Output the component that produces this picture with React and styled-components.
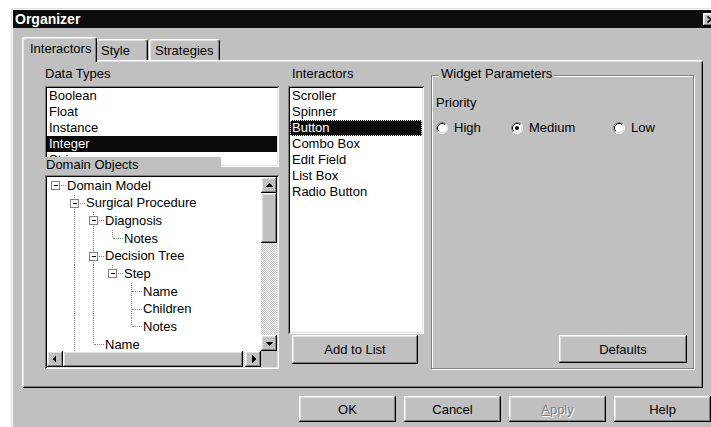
import React from "react";
import styled, { createGlobalStyle, css } from "styled-components";

const FACE = "#c0c0c0";
const LIGHT = "#dfdfdf";
const HI = "#ffffff";
const SHADOW = "#808080";
const DARK = "#000000";
const SELECT = "#0a0a0a";

const GlobalStyle = createGlobalStyle`
  * { box-sizing: border-box; }
  html, body { margin: 0; padding: 0; background: #fff; overflow: hidden; }
  body {
    font-family: "Liberation Sans", Arial, sans-serif;
    font-size: 13px;
    color: #000;
  }
`;

const raised = css`
  background: ${FACE};
  box-shadow: inset -1px -1px 0 ${DARK}, inset 1px 1px 0 ${HI},
    inset -2px -2px 0 ${SHADOW}, inset 2px 2px 0 ${LIGHT};
`;

const sunken = css`
  box-shadow: inset 1px 1px 0 ${SHADOW}, inset -1px -1px 0 ${HI},
    inset 2px 2px 0 ${DARK}, inset -2px -2px 0 ${LIGHT};
`;

const Page = styled.div`
  width: 100vw;
  height: 100vh;
  padding: 8px 0 0 11px;
  overflow: hidden;
  background: #fff;
`;

const Window = styled.div`
  width: 712px;
  height: 440px;
  padding: 2px;
  display: flex;
  flex-direction: column;
  background: ${FACE};
  box-shadow: inset 1px 1px 0 ${LIGHT}, inset 2px 2px 0 ${HI};
`;

const TitleBar = styled.div`
  height: 18px;
  flex: none;
  display: flex;
  align-items: center;
  padding-left: 2px;
  background: #0d0d0d;
  color: #fff;
  font-weight: bold;
  font-size: 14px;
`;

const CloseButton = styled.button`
  ${raised};
  margin-left: auto;
  margin-right: 2px;
  width: 16px;
  height: 13px;
  border: 0;
  padding: 0;
  display: grid;
  place-items: center;
`;

const DialogBody = styled.div`
  display: flex;
  flex-direction: column;
  padding: 9px 18px 0 9px;
`;

const TabRow = styled.div`
  height: 23px;
  display: flex;
  align-items: flex-end;
`;

const Tab = styled.div`
  position: relative;
  z-index: ${(p) => (p.$active ? 2 : 1)};
  width: ${(p) => p.$w}px;
  height: ${(p) => (p.$active ? 25 : 21)}px;
  margin-bottom: ${(p) => (p.$active ? -2 : 0)}px;
  margin-left: ${(p) => p.$shift || 0}px;
  padding: 3px 0 0 ${(p) => p.$pad}px;
  line-height: 16px;
  white-space: nowrap;
  background: ${FACE};
  border: 1px solid ${HI};
  border-right-color: ${DARK};
  border-bottom: none;
  border-radius: 3px 3px 0 0;
  box-shadow: inset -1px 0 0 ${SHADOW}, inset 1px 1px 0 ${LIGHT};
`;

const Panel = styled.div`
  height: 328px;
  display: flex;
  padding: 6px 9px 19px 23px;
  background: ${FACE};
  box-shadow: inset 1px 1px 0 ${HI}, inset -1px -1px 0 ${DARK},
    inset 2px 2px 0 ${LIGHT}, inset -2px -2px 0 ${SHADOW};
`;

const Column = styled.div`
  width: ${(p) => p.$w}px;
  margin-left: ${(p) => p.$gap || 0}px;
  display: flex;
  flex-direction: column;
`;

const FieldLabel = styled.div`
  height: 16px;
  line-height: 16px;
  margin-bottom: 4px;
  padding-left: ${(p) => p.$indent || 0}px;
`;

const ListBox = styled.div`
  ${sunken};
  background: #fff;
  padding: 2px;
  overflow: hidden;
  flex: ${(p) => (p.$grow ? 1 : "none")};
  height: ${(p) => (p.$h ? `${p.$h}px` : "auto")};
`;

const ListItem = styled.div`
  height: 16px;
  line-height: 16px;
  padding-left: 2px;
  white-space: nowrap;
  background: ${(p) => (p.$selected ? SELECT : "transparent")};
  color: ${(p) => (p.$selected ? "#fff" : "#000")};
  outline: ${(p) => (p.$focus ? `1px dotted ${HI}` : "none")};
  outline-offset: -1px;
`;

/* the caption sits over the bottom edge of the list above it */
const OverlayLabel = styled.div`
  position: relative;
  z-index: 1;
  width: 176px;
  height: 16px;
  line-height: 16px;
  margin-top: -10px;
  margin-bottom: 2px;
  padding-left: 1px;
  background: ${FACE};
`;

const TreeBox = styled.div`
  ${sunken};
  flex: 1;
  padding: 2px;
  background: #fff;
  display: grid;
  grid-template-columns: 1fr 16px;
  grid-template-rows: 1fr 16px;
  min-height: 0;
`;

const TreeArea = styled.div`
  overflow: hidden;
  background: #fff;
`;

const TreeRow = styled.div`
  height: 17.67px;
  display: flex;
  align-items: center;
  white-space: nowrap;
`;

const CellSvg = styled.svg`
  display: block;
  flex: none;
`;

const TreeText = styled.span`
  margin-left: 1px;
  line-height: 16px;
`;

const VScroll = styled.div`
  display: flex;
  flex-direction: column;
`;

const HScroll = styled.div`
  display: flex;
`;

const ScrollButton = styled.div`
  ${raised};
  width: 16px;
  height: 16px;
  flex: none;
  display: grid;
  place-items: center;
`;

const ScrollThumb = styled.div`
  ${raised};
  flex: none;
  width: ${(p) => (p.$horizontal ? `${p.$len}px` : "16px")};
  height: ${(p) => (p.$horizontal ? "16px" : `${p.$len}px`)};
`;

const ScrollTrack = styled.div`
  flex: 1;
  background: repeating-conic-gradient(${HI} 0 25%, ${FACE} 0 50%) 0 0 / 2px 2px;
`;

const ScrollCorner = styled.div`
  background: ${FACE};
`;

const PushButton = styled.button`
  ${raised};
  border: 0;
  padding: 0;
  font: inherit;
  color: ${(p) => (p.disabled ? SHADOW : "#000")};
  text-shadow: ${(p) => (p.disabled ? `1px 1px 0 ${HI}` : "none")};
  width: ${(p) => p.$w}px;
  height: ${(p) => p.$h}px;
  flex: none;
  display: grid;
  place-items: center;
`;

const AddButton = styled(PushButton)`
  margin: 1px 0 5px 4px;
`;

const Group = styled.div`
  width: 263px;
  margin: 9px 0 0 7px;
  display: flex;
  flex-direction: column;
  padding: 0 6px 5px 4px;
  border: 1px solid ${SHADOW};
  box-shadow: inset 1px 1px 0 ${HI}, 1px 1px 0 ${HI};
`;

const Legend = styled.div`
  align-self: flex-start;
  margin: -10px 0 0 3px;
  padding: 0 2px;
  height: 16px;
  line-height: 16px;
  background: ${FACE};
`;

const GroupText = styled.div`
  margin-top: 13px;
  height: 16px;
  line-height: 16px;
`;

const RadioRow = styled.div`
  margin-top: 9px;
  display: grid;
  grid-template-columns: 75px 102px auto;
`;

const RadioOption = styled.label`
  display: flex;
  align-items: center;
  gap: 6px;
  height: 16px;
  line-height: 16px;
`;

const DefaultsButton = styled(PushButton)`
  margin-top: auto;
  align-self: flex-end;
`;

const Footer = styled.div`
  display: flex;
  justify-content: flex-end;
  gap: 8px;
  margin: 8px -8px 0 0;
`;

const Mnemonic = styled.span`
  text-decoration: underline;
`;

/* ---------- drawings ---------- */

const Arrow = ({ dir }) => {
  const pts = {
    up: "4,10 8,6 12,10",
    down: "4,7 8,11 12,7",
    left: "9,4 5,8 9,12",
    right: "7,4 11,8 7,12",
  }[dir];
  return (
    <svg width="16" height="16" viewBox="0 0 16 16">
      <polygon points={pts} fill="#000" shapeRendering="crispEdges" />
    </svg>
  );
};

const CloseGlyph = () => (
  <svg width="8" height="7" viewBox="0 0 8 7">
    <path d="M0.5 0.5 L7.5 6.5 M7.5 0.5 L0.5 6.5" stroke="#000" strokeWidth="1.6" />
  </svg>
);

const Radio = ({ checked }) => (
  <svg width="12" height="12" viewBox="0 0 12 12">
    <circle cx="6" cy="6" r="5" fill="#fff" />
    <path d="M2.11 9.89 A5.5 5.5 0 0 1 9.89 2.11" stroke={SHADOW} fill="none" />
    <path d="M9.89 2.11 A5.5 5.5 0 0 1 2.11 9.89" stroke={HI} fill="none" />
    <path d="M2.82 9.18 A4.5 4.5 0 0 1 9.18 2.82" stroke={DARK} fill="none" />
    <path d="M9.18 2.82 A4.5 4.5 0 0 1 2.82 9.18" stroke={LIGHT} fill="none" />
    {checked && <circle cx="6" cy="6" r="2" fill="#000" />}
  </svg>
);

const ROW_H = 17.67;
const MID = 8.5;

// One indent column of a tree row: a pass-through guide line, or the row's
// own elbow connector with an optional expand box.
const TreeCell = ({ guide, own, root, last, box }) => (
  <CellSvg width="19" height={ROW_H} viewBox={`0 0 19 ${ROW_H}`}>
    <g stroke={SHADOW} strokeDasharray="1 1" shapeRendering="crispEdges">
      {guide && <line x1="8.5" y1="0" x2="8.5" y2={ROW_H} />}
      {own && !root && <line x1="8.5" y1="0" x2="8.5" y2={last ? MID : ROW_H} />}
      {own && <line x1="8.5" y1={MID} x2="19" y2={MID} />}
    </g>
    {box && (
      <g shapeRendering="crispEdges">
        <rect x="4.5" y={MID - 4} width="8" height="8" fill="#fff" stroke={SHADOW} />
        <line x1="6.5" y1={MID} x2="11" y2={MID} stroke="#000" />
      </g>
    )}
  </CellSvg>
);

/* ---------- data ---------- */

const dataTypes = ["Boolean", "Float", "Instance", "Integer", "String"];
const interactors = [
  "Scroller",
  "Spinner",
  "Button",
  "Combo Box",
  "Edit Field",
  "List Box",
  "Radio Button",
];

// moreBelow: the node has further siblings scrolled out of view
const domainModel = {
  label: "Domain Model",
  open: true,
  children: [
    {
      label: "Surgical Procedure",
      open: true,
      moreBelow: true,
      children: [
        { label: "Diagnosis", open: true, children: [{ label: "Notes" }] },
        {
          label: "Decision Tree",
          open: true,
          children: [
            {
              label: "Step",
              open: true,
              children: [{ label: "Name" }, { label: "Children" }, { label: "Notes" }],
            },
          ],
        },
        { label: "Name" },
      ],
    },
  ],
};

function flatten(node, guides = [], last = true, root = true, out = []) {
  out.push({ label: node.label, guides, last, root, box: !!node.children });
  if (node.children && node.open) {
    const childGuides = [...guides, !root && !last];
    node.children.forEach((child, i) => {
      const childLast = i === node.children.length - 1 && !child.moreBelow;
      flatten(child, childGuides, childLast, false, out);
    });
  }
  return out;
}

const treeRows = flatten(domainModel);

const tabs = [
  { label: "Interactors", w: 75, pad: 7, active: true },
  { label: "Style", w: 53, pad: 5, shift: -2 },
  { label: "Strategies", w: 71, pad: 5, shift: 1 },
];

export default function App() {
  return (
    <>
      <GlobalStyle />
      <Page>
        <Window>
          <TitleBar>
            Organizer
            <CloseButton aria-label="Close">
              <CloseGlyph />
            </CloseButton>
          </TitleBar>
          <DialogBody>
            <TabRow>
              {tabs.map((t) => (
                <Tab key={t.label} $active={t.active} $w={t.w} $pad={t.pad} $shift={t.shift}>
                  {t.label}
                </Tab>
              ))}
            </TabRow>
            <Panel>
              <Column $w={234}>
                <FieldLabel>Data Types</FieldLabel>
                <ListBox $h={81}>
                  {dataTypes.map((d) => (
                    <ListItem key={d} $selected={d === "Integer"}>
                      {d}
                    </ListItem>
                  ))}
                </ListBox>
                <OverlayLabel>Domain Objects</OverlayLabel>
                <TreeBox>
                  <TreeArea>
                    {treeRows.map((r, i) => (
                      <TreeRow key={i}>
                        {r.guides.map((g, j) => (
                          <TreeCell key={j} guide={g} />
                        ))}
                        <TreeCell own root={r.root} last={r.last} box={r.box} />
                        <TreeText>{r.label}</TreeText>
                      </TreeRow>
                    ))}
                  </TreeArea>
                  <VScroll>
                    <ScrollButton>
                      <Arrow dir="up" />
                    </ScrollButton>
                    <ScrollThumb $len={50} />
                    <ScrollTrack />
                    <ScrollButton>
                      <Arrow dir="down" />
                    </ScrollButton>
                  </VScroll>
                  <HScroll>
                    <ScrollButton>
                      <Arrow dir="left" />
                    </ScrollButton>
                    <ScrollThumb $horizontal $len={180} />
                    <ScrollTrack />
                    <ScrollButton>
                      <Arrow dir="right" />
                    </ScrollButton>
                  </HScroll>
                  <ScrollCorner />
                </TreeBox>
              </Column>

              <Column $w={136} $gap={9}>
                <FieldLabel $indent={4}>Interactors</FieldLabel>
                <ListBox $grow>
                  {interactors.map((d) => (
                    <ListItem key={d} $selected={d === "Button"} $focus={d === "Button"}>
                      {d}
                    </ListItem>
                  ))}
                </ListBox>
                <AddButton $w={126} $h={29}>
                  Add to List
                </AddButton>
              </Column>

              <Group>
                <Legend>Widget Parameters</Legend>
                <GroupText>Priority</GroupText>
                <RadioRow>
                  <RadioOption>
                    <Radio />
                    High
                  </RadioOption>
                  <RadioOption>
                    <Radio checked />
                    Medium
                  </RadioOption>
                  <RadioOption>
                    <Radio />
                    Low
                  </RadioOption>
                </RadioRow>
                <DefaultsButton $w={128} $h={28}>
                  Defaults
                </DefaultsButton>
              </Group>
            </Panel>
            <Footer>
              <PushButton $w={97} $h={26}>OK</PushButton>
              <PushButton $w={97} $h={26}>Cancel</PushButton>
              <PushButton $w={97} $h={26} disabled>
                <span>
                  <Mnemonic>A</Mnemonic>pply
                </span>
              </PushButton>
              <PushButton $w={97} $h={26}>Help</PushButton>
            </Footer>
          </DialogBody>
        </Window>
      </Page>
    </>
  );
}
